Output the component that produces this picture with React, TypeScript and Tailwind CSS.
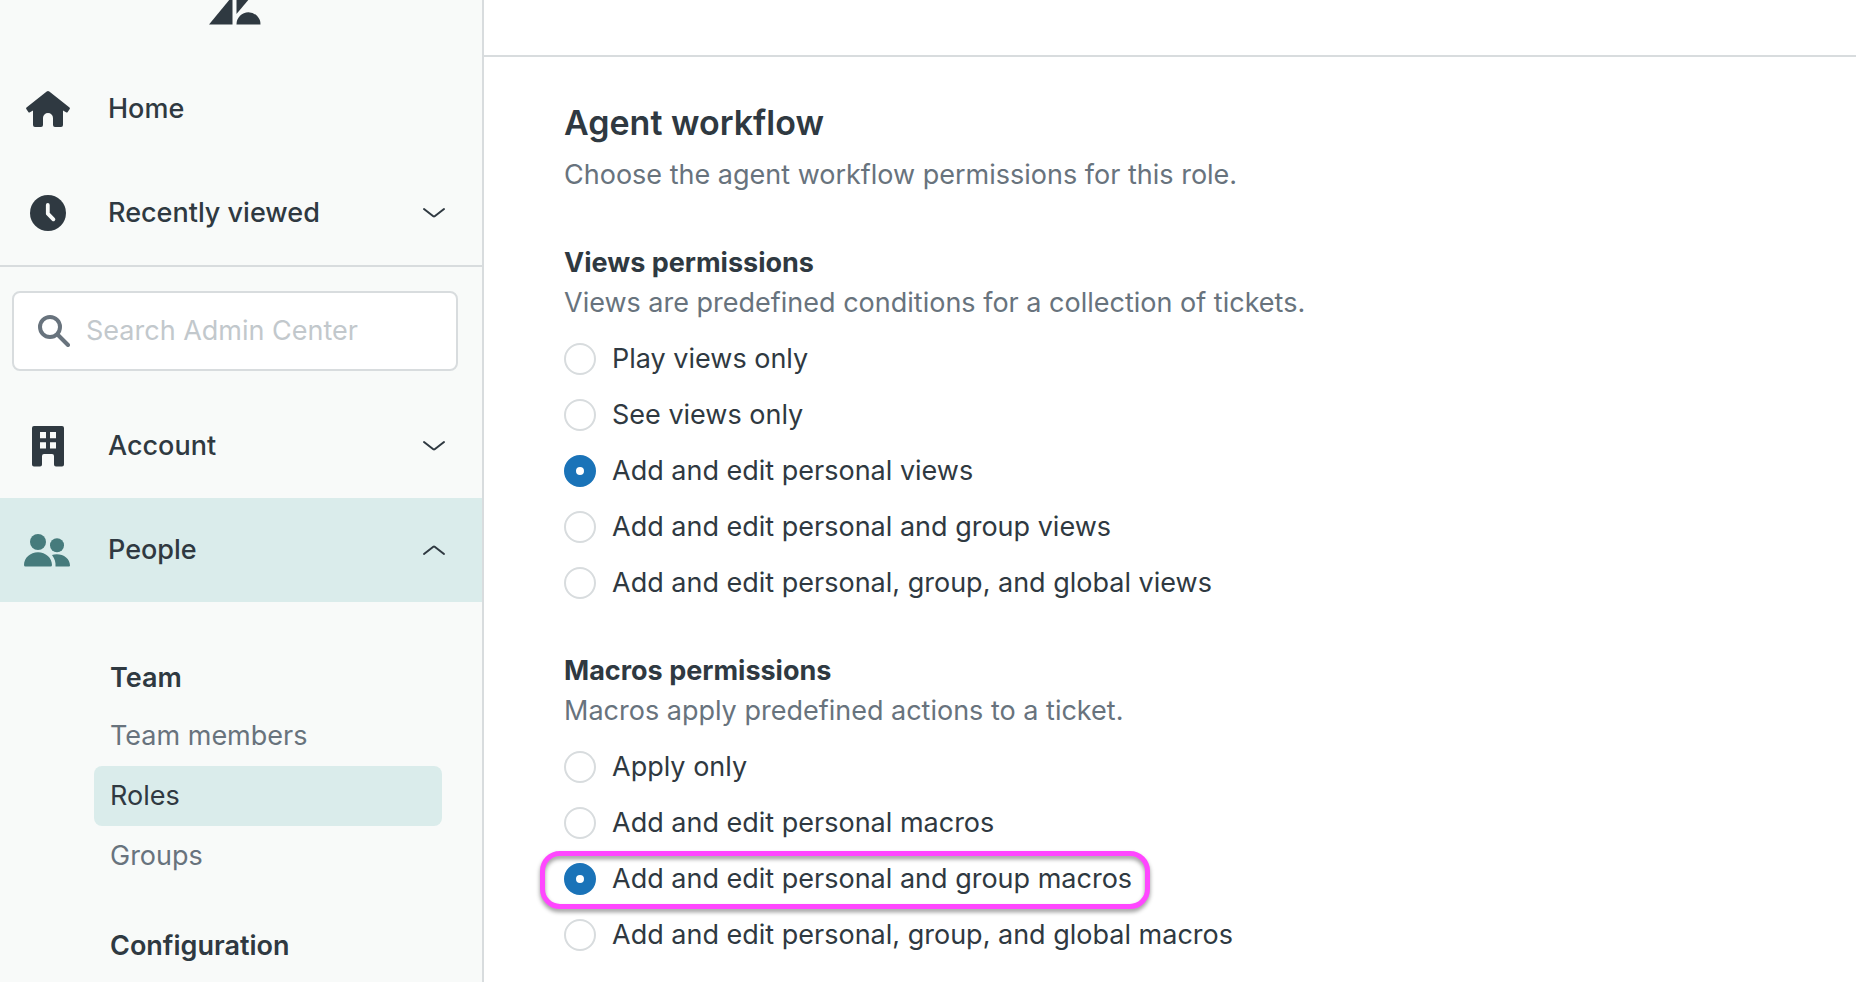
import { useState, type ReactNode } from 'react';
import clsx from 'clsx';

const viewsOptions = [
  'Play views only',
  'See views only',
  'Add and edit personal views',
  'Add and edit personal and group views',
  'Add and edit personal, group, and global views',
];

const macrosOptions = [
  'Apply only',
  'Add and edit personal macros',
  'Add and edit personal and group macros',
  'Add and edit personal, group, and global macros',
];

const teamLinks = ['Team members', 'Roles', 'Groups'];

function Logo() {
  return (
    <svg viewBox="0 0 52 25" className="h-[25px] w-[52px]" fill="#2f3941" role="img" aria-label="Zendesk">
      <path d="M0 24.5 23.5 -4V24.5z" />
      <path d="M27.5 -14H51L27.5 14z" />
      <path d="M27.5 24.5a12 12.2 0 0 1 24 0z" />
    </svg>
  );
}

function HomeIcon() {
  return (
    <svg viewBox="0 0 48 48" className="size-12" fill="currentColor" aria-hidden="true">
      <path d="M22.7 6.5a2 2 0 0 1 2.6 0L45.5 22.4a1.2 1.2 0 0 1 .2 1.6l-2 3a1.2 1.2 0 0 1-1.7.3L39 25.4V40a2 2 0 0 1-2 2h-6a2 2 0 0 1-2-2v-7a5 5 0 0 0-10 0v7a2 2 0 0 1-2 2h-6a2 2 0 0 1-2-2V25.4L6 27.3a1.2 1.2 0 0 1-1.7-.3l-2-3a1.2 1.2 0 0 1 .2-1.6z" />
    </svg>
  );
}

function ClockIcon() {
  return (
    <svg viewBox="0 0 48 48" className="size-12" aria-hidden="true">
      <circle cx="24" cy="24" r="18" fill="currentColor" />
      <path d="M23.8 16v8.7l5.6 5.6" fill="none" stroke="#f8faf9" strokeWidth="3.8" strokeLinecap="round" strokeLinejoin="round" />
    </svg>
  );
}

function BuildingIcon() {
  return (
    <svg viewBox="0 0 48 48" className="size-12" fill="currentColor" fillRule="evenodd" aria-hidden="true">
      <path d="M10 4h28a2 2 0 0 1 2 2v36.5a2 2 0 0 1-2 2h-6a2 2 0 0 1-2-2V34a2 2 0 0 0-2-2h-8a2 2 0 0 0-2 2v8.5a2 2 0 0 1-2 2h-6a2 2 0 0 1-2-2V6a2 2 0 0 1 2-2zM16 10v6.300h6V10zM26 10v6.300h6V10zM16 20.200v6.300h6v-6.300zM26 20.200v6.300h6v-6.300z" />
    </svg>
  );
}

function PeopleIcon() {
  return (
    <svg viewBox="0 0 48 48" className="size-12 text-[#467b7c]" fill="currentColor" aria-hidden="true">
      <circle cx="14" cy="16" r="8" />
      <circle cx="33" cy="19.2" r="7" />
      <path d="M0 39c0-7 6.3-12.7 14-12.7S28 32 28 39a1.5 1.5 0 0 1-1.5 1.5h-25A1.5 1.5 0 0 1 0 39z" />
      <path d="M28 29c1.4-.5 3-.8 4.7-.8C40 28.2 46 33 46 39.5a1 1 0 0 1-1 1H31.500c.3-4.2-.5-7.2-3.5-11.5z" />
    </svg>
  );
}

function SearchIcon() {
  return (
    <svg viewBox="0 0 32 32" className="size-8 shrink-0" fill="none" stroke="#68737d" strokeWidth="4" strokeLinecap="round" aria-hidden="true">
      <circle cx="12" cy="12" r="10" />
      <path d="M19.5 19.5 30 30" />
    </svg>
  );
}

function Chevron({ up }: { up?: boolean }) {
  return (
    <svg viewBox="0 0 24 24" className={clsx('size-6', up && 'rotate-180')} fill="none" stroke="currentColor" strokeWidth="2" strokeLinecap="round" strokeLinejoin="round" aria-hidden="true">
      <path d="M2 8l9.3 7.2a1.2 1.2 0 0 0 1.4 0L22 8" />
    </svg>
  );
}

type NavRowProps = {
  icon: ReactNode;
  label: string;
  chevron?: 'up' | 'down';
  active?: boolean;
};

function NavRow({ icon, label, chevron, active }: NavRowProps) {
  return (
    <button
      type="button"
      className={clsx('flex h-26 w-full items-center pr-9 pl-6 text-left font-medium', active && 'bg-[#daeceb]')}
    >
      {icon}
      <span className="ml-9 flex-1">{label}</span>
      {chevron && <Chevron up={chevron === 'up'} />}
    </button>
  );
}

type PermissionGroupProps = {
  name: string;
  title: string;
  description: string;
  options: string[];
  initial: string;
  highlighted?: string;
};

function PermissionGroup({ name, title, description, options, initial, highlighted }: PermissionGroupProps) {
  const [selected, setSelected] = useState(initial);

  return (
    <fieldset className="mb-10">
      <legend className="font-bold">{title}</legend>
      <p className="mb-2 text-[#68737d]">{description}</p>
      {options.map((option) => (
        <div key={option}>
          <label className="relative inline-flex h-14 items-center gap-4 align-top">
            <input
              type="radio"
              name={name}
              checked={selected === option}
              onChange={() => setSelected(option)}
              className="size-8 shrink-0 appearance-none rounded-full border-2 border-[#d8dcde] bg-white checked:border-[12px] checked:border-[#1a73b8]"
            />
            {option}
            {option === highlighted && (
              <span className="pointer-events-none absolute top-0 -right-[18px] -bottom-0.5 -left-6 rounded-[20px] border-5 border-[#ff46ff] drop-shadow-[0_3px_2px_rgba(0,0,0,0.4)]" />
            )}
          </label>
        </div>
      ))}
    </fieldset>
  );
}

export default function App() {
  return (
    <div className="flex min-h-screen bg-white font-['Inter',sans-serif] text-[27px] leading-10 text-[#2f3941]">
      <aside className="w-[484px] shrink-0 border-r-2 border-[#d8dcde] bg-[#f8faf9]">
        <div className="flex h-[57px] items-start justify-center pr-3">
          <Logo />
        </div>
        <nav>
          <NavRow icon={<HomeIcon />} label="Home" />
          <NavRow icon={<ClockIcon />} label="Recently viewed" chevron="down" />
          <div className="border-t-2 border-[#d8dcde] pt-6 pr-6 pb-[23px] pl-3">
            <label className="flex h-20 items-center gap-4 rounded-lg border-2 border-[#d8dcde] bg-white px-6">
              <SearchIcon />
              <input
                type="search"
                aria-label="Search Admin Center"
                placeholder="Search Admin Center"
                className="w-full min-w-0 bg-transparent outline-none placeholder:text-[#c2c8cc]"
              />
            </label>
          </div>
          <NavRow icon={<BuildingIcon />} label="Account" chevron="down" />
          <NavRow icon={<PeopleIcon />} label="People" chevron="up" active />
          <div className="pt-14 pr-10 pl-[94px]">
            <h3 className="mb-2 px-4 font-semibold">Team</h3>
            <ul className="mb-10">
              {teamLinks.map((link) => (
                <li key={link}>
                  <a
                    href="#"
                    className={clsx(
                      'flex h-15 items-center rounded-lg px-4',
                      link === 'Roles' ? 'bg-[#daeceb]' : 'text-[#68737d]',
                    )}
                  >
                    {link}
                  </a>
                </li>
              ))}
            </ul>
            <h3 className="px-4 font-semibold">Configuration</h3>
          </div>
        </nav>
      </aside>

      <main className="min-w-0 flex-1">
        <div className="h-[57px] border-b-2 border-[#d8dcde]" />
        <div className="px-20 pt-10">
          <h1 className="mb-1.5 text-[34px] leading-13 font-semibold">Agent workflow</h1>
          <p className="mb-12 text-[#68737d]">Choose the agent workflow permissions for this role.</p>
          <PermissionGroup
            name="views"
            title="Views permissions"
            description="Views are predefined conditions for a collection of tickets."
            options={viewsOptions}
            initial="Add and edit personal views"
          />
          <PermissionGroup
            name="macros"
            title="Macros permissions"
            description="Macros apply predefined actions to a ticket."
            options={macrosOptions}
            initial="Add and edit personal and group macros"
            highlighted="Add and edit personal and group macros"
          />
        </div>
      </main>
    </div>
  );
}
